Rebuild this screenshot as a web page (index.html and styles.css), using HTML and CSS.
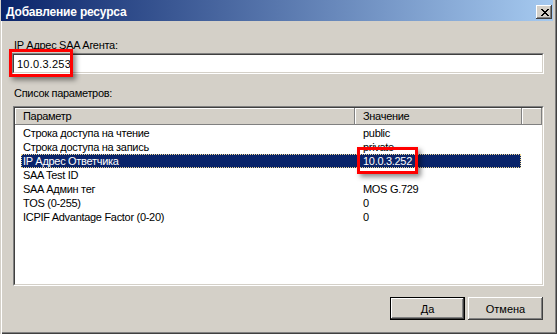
FILE: index.html
```html
<!DOCTYPE html>
<html lang="ru">
<head>
    <meta charset="UTF-8">
    <title>Добавление ресурса</title>
    <link rel="stylesheet" href="styles.css">
</head>
<body>
    <div class="window">
        <div class="titlebar">
            <span class="title">Добавление ресурса</span>
            <button class="close-btn" aria-label="Закрыть">
                <svg width="8" height="7" viewBox="0 0 8 7" shape-rendering="crispEdges"><path fill="#000" d="M0 0h2v1H0zM6 0h2v1H6zM1 1h2v1H1zM5 1h2v1H5zM2 2h4v1H2zM3 3h2v1H3zM2 4h4v1H2zM1 5h2v1H1zM5 5h2v1H5zM0 6h2v1H0zM6 6h2v1H6z"/></svg>
            </button>
        </div>

        <div class="dialog-body">
            <label class="field-label" for="agentIp">IP Адрес SAA Агента:</label>
            <div class="textbox">
                <input type="text" id="agentIp" class="textbox-inner" value="10.0.3.253">
            </div>

            <div class="field-label list-label">Список параметров:</div>
            <div class="listview">
                <div class="listview-inner">
                    <div class="lv-header">
                        <div class="lv-col col-name">Параметр</div>
                        <div class="lv-col col-value">Значение</div>
                        <div class="lv-col col-rest"></div>
                    </div>
                    <div class="lv-rows">
                        <div class="lv-row"><span class="cell-name">Строка доступа на чтение</span><span class="cell-value">public</span></div>
                        <div class="lv-row"><span class="cell-name">Строка доступа на запись</span><span class="cell-value">private</span></div>
                        <div class="lv-row selected"><span class="cell-name">IP Адрес Ответчика</span><span class="cell-value">10.0.3.252</span></div>
                        <div class="lv-row"><span class="cell-name">SAA Test ID</span><span class="cell-value"></span></div>
                        <div class="lv-row"><span class="cell-name">SAA Админ тег</span><span class="cell-value">MOS G.729</span></div>
                        <div class="lv-row"><span class="cell-name">TOS (0-255)</span><span class="cell-value">0</span></div>
                        <div class="lv-row"><span class="cell-name">ICPIF Advantage Factor (0-20)</span><span class="cell-value">0</span></div>
                    </div>
                </div>
            </div>

            <div class="buttons">
                <button class="btn btn-default">Да</button>
                <button class="btn">Отмена</button>
            </div>
        </div>

        <!-- annotation frames drawn over the dialog -->
        <div class="mark mark-agent"></div>
        <div class="mark mark-responder"></div>
    </div>
</body>
</html>
```

FILE: styles.css
```css
* { box-sizing: border-box; }
body { margin: 0; background-color: #d4d0c8; font-family: "Liberation Sans", Arial, sans-serif; font-size: 11px; letter-spacing: -0.3px; color: #000; }

.window { position: relative; width: 557px; height: 334px; padding: 0 4px 0 1px; background-color: #d4d0c8; box-shadow: inset 1px 0 #d4d0c8, inset 2px 0 #fff, inset -1px -1px #404040, inset -2px -2px #808080; }

.titlebar { display: flex; justify-content: space-between; align-items: flex-start; height: 21px; padding: 0 1px 0 5px; background: linear-gradient(to right, #0a246a, #a6caf0); }
.title { padding-top: 5px; color: #fff; font-weight: bold; font-size: 12px; line-height: 14px; letter-spacing: -0.2px; }
.close-btn { display: flex; align-items: center; justify-content: center; width: 16px; height: 14px; margin-top: 5px; padding: 0 0 0 1px; border: none; background-color: #d4d0c8; box-shadow: inset -1px -1px #404040, inset 1px 1px #fff, inset -2px -2px #808080; }

.dialog-body { padding: 18px 9px 0 11px; }
.field-label { display: block; padding-left: 2px; line-height: 13px; height: 13px; }
.list-label { margin-top: 13px; }

.textbox { margin-top: 1px; height: 21px; border: 1px solid; border-color: #808080 #fff #fff #808080; }
.textbox-inner { display: block; width: 100%; height: 100%; margin: 0; padding: 0 0 0 3px; border: 1px solid; border-color: #404040 #d4d0c8 #d4d0c8 #404040; background-color: #fff; font: inherit; letter-spacing: 0.2px; line-height: 17px; color: #000; outline: none; }

.listview { margin: 6px 0 0 1px; height: 180px; border: 1px solid; border-color: #808080 #fff #fff #808080; }
.listview-inner { height: 100%; border: 1px solid; border-color: #404040 #d4d0c8 #d4d0c8 #404040; background-color: #fff; overflow: hidden; }

.lv-header { display: flex; height: 17px; }
.lv-col { height: 17px; padding-left: 8px; line-height: 16px; background-color: #d4d0c8; box-shadow: inset -1px -1px #808080, inset 1px 1px #fff; white-space: nowrap; }
.col-name { width: 340px; }
.col-value { width: 167px; }
.col-rest { flex: 1; }

.lv-rows { padding-top: 1px; }
.lv-row { display: flex; width: 500px; height: 14px; margin-left: 6px; line-height: 14px; white-space: nowrap; }
.cell-name { width: 334px; padding-left: 2px; }
.cell-value { width: 166px; padding-left: 8px; }
.lv-row.selected { background-color: #0a246a; color: #fff; outline: 1px dotted #f0d890; outline-offset: -1px; }

.buttons { display: flex; justify-content: flex-end; gap: 3px; margin: 11px 1px 0 0; }
.btn { width: 75px; height: 23px; padding: 0; border: none; background-color: #d4d0c8; font: inherit; color: #000; box-shadow: inset -1px -1px #404040, inset 1px 1px #fff, inset -2px -2px #808080; }
.btn-default { border: 1px solid #000; }

.mark { position: absolute; border: 3px solid #f00; box-shadow: 3px 3px 5px rgba(0, 0, 0, 0.45); }
.mark-agent { left: 9px; top: 49px; width: 64px; height: 28px; }
.mark-responder { left: 357px; top: 147px; width: 61px; height: 27px; }
```
